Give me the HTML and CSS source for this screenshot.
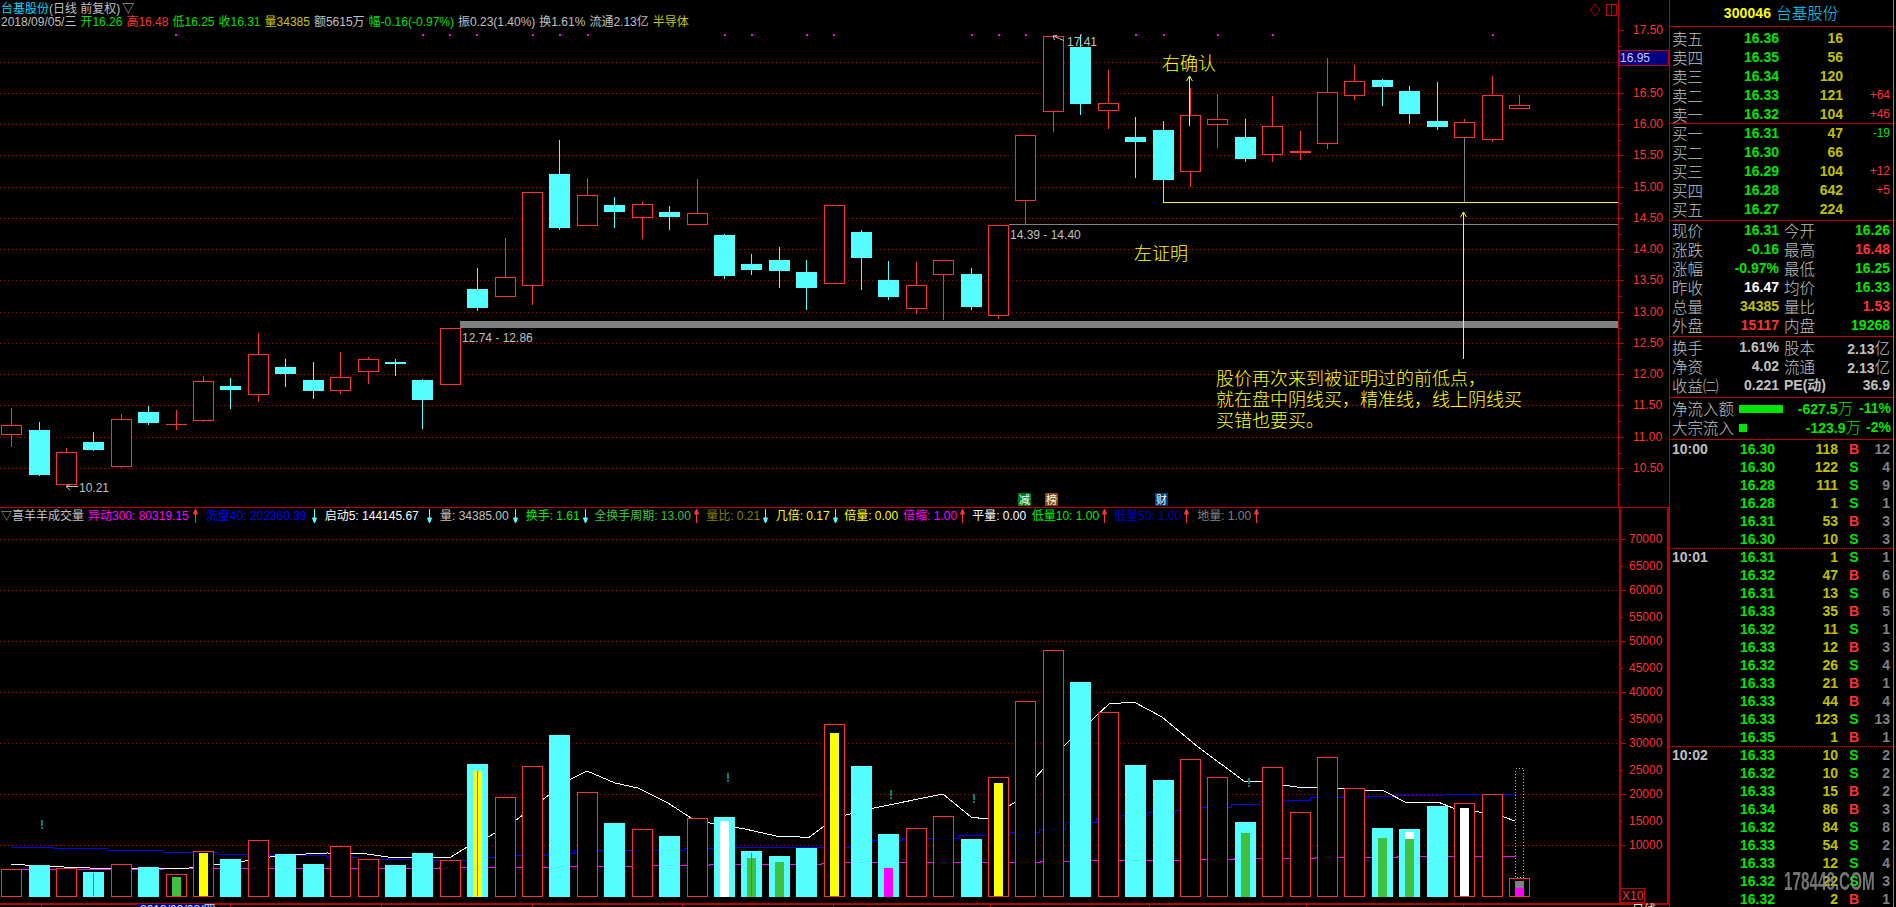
FILE: index.html
```html
<!DOCTYPE html>
<html lang="zh">
<head>
<meta charset="utf-8">
<title>台基股份 日线</title>
<link rel="stylesheet" href="styles.css">
</head>
<body>
<div class="terminal">
  <main class="charts">
    <svg id="plot" class="plot" width="1669" height="907" viewBox="0 0 1669 907"></svg>
    <section class="pane pane-main">
      <div class="quote-line"><span class="c">台基股份</span><span class="s">(日线 前复权)</span><span class="s tri">▽</span></div>
      <div class="quote-line items">
        <span class="s">2018/09/05/三</span>
        <span class="gl">开16.26</span>
        <span class="r">高16.48</span>
        <span class="gl">低16.25</span>
        <span class="gl">收16.31</span>
        <span class="yd">量34385</span>
        <span class="s">额5615万</span>
        <span class="gl">幅-0.16(-0.97%)</span>
        <span class="s">振0.23(1.40%)</span>
        <span class="s">换1.61%</span>
        <span class="s">流通2.13亿</span>
        <span class="yd">半导体</span>
      </div>
    </section>
    <section class="pane pane-sub">
      <div class="legend">
        <span class="s tri2">▽</span><span class="s name">喜羊羊成交量</span>
        <span class="ind i1 m">异动300: 80319.15<svg class="arrow up" viewBox="0 0 16 14"><use href="#ar-up"/></svg></span>
        <span class="ind i2 b">洗盘40: 202360.39<svg class="arrow dn" viewBox="0 0 16 14"><use href="#ar-dn"/></svg></span>
        <span class="ind i3 wh">启动5: 144145.67<svg class="arrow dn" viewBox="0 0 16 14"><use href="#ar-dn"/></svg></span>
        <span class="ind i4 s">量: 34385.00<svg class="arrow dn" viewBox="0 0 16 14"><use href="#ar-dn"/></svg></span>
        <span class="ind i5 gb">换手: 1.61<svg class="arrow dn" viewBox="0 0 16 14"><use href="#ar-dn"/></svg></span>
        <span class="ind i6 gm">全换手周期: 13.00<svg class="arrow up" viewBox="0 0 16 14"><use href="#ar-up"/></svg></span>
        <span class="ind i7 ol">量比: 0.21<svg class="arrow dn" viewBox="0 0 16 14"><use href="#ar-dn"/></svg></span>
        <span class="ind i8 yb">几倍: 0.17<svg class="arrow dn" viewBox="0 0 16 14"><use href="#ar-dn"/></svg></span>
        <span class="ind i9 yb">倍量: 0.00</span>
        <span class="ind i10 m">倍缩: 1.00<svg class="arrow up" viewBox="0 0 16 14"><use href="#ar-up"/></svg></span>
        <span class="ind i11 wh">平量: 0.00</span>
        <span class="ind i12 gb">低量10: 1.00<svg class="arrow up" viewBox="0 0 16 14"><use href="#ar-up"/></svg></span>
        <span class="ind i13 bd">低量50: 1.00<svg class="arrow up" viewBox="0 0 16 14"><use href="#ar-up"/></svg></span>
        <span class="ind i14 gy">地量: 1.00<svg class="arrow up" viewBox="0 0 16 14"><use href="#ar-up"/></svg></span>
      </div>
    </section>
    <svg class="defs" width="0" height="0">
      <symbol id="ar-up" viewBox="0 0 16 14"><path d="M5.5 14V0M3.5 5L5.5 0L7.5 5Z"/></symbol>
      <symbol id="ar-dn" viewBox="0 0 16 14"><path d="M5.5 0V14M3.5 9L5.5 14L7.5 9Z"/></symbol>
    </svg>
  </main>

  <aside class="side">
    <header class="side-title"><span class="code">300046</span><span class="stock">台基股份</span></header>

    <section class="book sell">
      <div class="bk"><span class="lb">卖五</span><b class="g">16.36</b><b class="y">16</b><i></i></div>
      <div class="bk"><span class="lb">卖四</span><b class="g">16.35</b><b class="y">56</b><i></i></div>
      <div class="bk"><span class="lb">卖三</span><b class="g">16.34</b><b class="y">120</b><i></i></div>
      <div class="bk"><span class="lb">卖二</span><b class="g">16.33</b><b class="y">121</b><i class="r">+64</i></div>
      <div class="bk"><span class="lb">卖一</span><b class="g">16.32</b><b class="y">104</b><i class="r">+46</i></div>
    </section>
    <section class="book buy">
      <div class="bk"><span class="lb">买一</span><b class="g">16.31</b><b class="y">47</b><i class="g">-19</i></div>
      <div class="bk"><span class="lb">买二</span><b class="g">16.30</b><b class="y">66</b><i></i></div>
      <div class="bk"><span class="lb">买三</span><b class="g">16.29</b><b class="y">104</b><i class="r">+12</i></div>
      <div class="bk"><span class="lb">买四</span><b class="g">16.28</b><b class="y">642</b><i class="r">+5</i></div>
      <div class="bk"><span class="lb">买五</span><b class="g">16.27</b><b class="y">224</b><i></i></div>
    </section>

    <section class="stats">
      <div class="st"><span class="lb">现价</span><b class="g">16.31</b><span class="lb">今开</span><b class="g">16.26</b></div>
      <div class="st"><span class="lb">涨跌</span><b class="g">-0.16</b><span class="lb">最高</span><b class="r">16.48</b></div>
      <div class="st"><span class="lb">涨幅</span><b class="g">-0.97%</b><span class="lb">最低</span><b class="g">16.25</b></div>
      <div class="st"><span class="lb">昨收</span><b class="w">16.47</b><span class="lb">均价</span><b class="g">16.33</b></div>
      <div class="st"><span class="lb">总量</span><b class="y">34385</b><span class="lb">量比</span><b class="r">1.53</b></div>
      <div class="st"><span class="lb">外盘</span><b class="r">15117</b><span class="lb">内盘</span><b class="g">19268</b></div>
    </section>
    <section class="stats fund">
      <div class="st"><span class="lb">换手</span><b class="s">1.61%</b><span class="lb">股本</span><b class="s">2.13<span class="cjk">亿</span></b></div>
      <div class="st"><span class="lb">净资</span><b class="s">4.02</b><span class="lb">流通</span><b class="s">2.13<span class="cjk">亿</span></b></div>
      <div class="st"><span class="lb">收益㈡</span><b class="s">0.221</b><span class="lb pe">PE(动)</span><b class="s">36.9</b></div>
    </section>

    <section class="flow">
      <div class="fl"><span class="lb">净流入额</span><span class="track"><span class="bar" style="width:44px"></span></span><b class="g amt">-627.5<span class="cjk">万</span></b><b class="g pct">-11%</b></div>
      <div class="fl"><span class="lb">大宗流入</span><span class="track"><span class="bar" style="width:8px"></span></span><b class="g amt long">-123.9<span class="cjk">万</span></b><b class="g pct">-2%</b></div>
    </section>

    <section class="trades">
      <div class="tr"><b class="s">10:00</b><b class="g">16.30</b><b class="y">118</b><b class="r bs">B</b><b class="gy">12</b></div>
      <div class="tr"><b></b><b class="g">16.30</b><b class="y">122</b><b class="g bs">S</b><b class="gy">4</b></div>
      <div class="tr"><b></b><b class="g">16.28</b><b class="y">111</b><b class="g bs">S</b><b class="gy">9</b></div>
      <div class="tr"><b></b><b class="g">16.28</b><b class="y">1</b><b class="g bs">S</b><b class="gy">1</b></div>
      <div class="tr"><b></b><b class="g">16.31</b><b class="y">53</b><b class="r bs">B</b><b class="gy">3</b></div>
      <div class="tr"><b></b><b class="g">16.30</b><b class="y">10</b><b class="g bs">S</b><b class="gy">3</b></div>
      <div class="tr min"><b class="s">10:01</b><b class="g">16.31</b><b class="y">1</b><b class="g bs">S</b><b class="gy">1</b></div>
      <div class="tr"><b></b><b class="g">16.32</b><b class="y">47</b><b class="r bs">B</b><b class="gy">6</b></div>
      <div class="tr"><b></b><b class="g">16.31</b><b class="y">13</b><b class="g bs">S</b><b class="gy">6</b></div>
      <div class="tr"><b></b><b class="g">16.33</b><b class="y">35</b><b class="r bs">B</b><b class="gy">5</b></div>
      <div class="tr"><b></b><b class="g">16.32</b><b class="y">11</b><b class="g bs">S</b><b class="gy">1</b></div>
      <div class="tr"><b></b><b class="g">16.33</b><b class="y">12</b><b class="r bs">B</b><b class="gy">3</b></div>
      <div class="tr"><b></b><b class="g">16.32</b><b class="y">26</b><b class="g bs">S</b><b class="gy">4</b></div>
      <div class="tr"><b></b><b class="g">16.33</b><b class="y">21</b><b class="r bs">B</b><b class="gy">1</b></div>
      <div class="tr"><b></b><b class="g">16.33</b><b class="y">44</b><b class="r bs">B</b><b class="gy">4</b></div>
      <div class="tr"><b></b><b class="g">16.33</b><b class="y">123</b><b class="g bs">S</b><b class="gy">13</b></div>
      <div class="tr"><b></b><b class="g">16.35</b><b class="y">1</b><b class="r bs">B</b><b class="gy">1</b></div>
      <div class="tr min"><b class="s">10:02</b><b class="g">16.33</b><b class="y">10</b><b class="g bs">S</b><b class="gy">2</b></div>
      <div class="tr"><b></b><b class="g">16.32</b><b class="y">10</b><b class="g bs">S</b><b class="gy">2</b></div>
      <div class="tr"><b></b><b class="g">16.33</b><b class="y">15</b><b class="r bs">B</b><b class="gy">2</b></div>
      <div class="tr"><b></b><b class="g">16.34</b><b class="y">86</b><b class="r bs">B</b><b class="gy">3</b></div>
      <div class="tr"><b></b><b class="g">16.32</b><b class="y">84</b><b class="g bs">S</b><b class="gy">8</b></div>
      <div class="tr"><b></b><b class="g">16.33</b><b class="y">54</b><b class="g bs">S</b><b class="gy">2</b></div>
      <div class="tr"><b></b><b class="g">16.33</b><b class="y">12</b><b class="g bs">S</b><b class="gy">4</b></div>
      <div class="tr"><b></b><b class="g">16.32</b><b class="y">22</b><b class="g bs">S</b><b class="gy">3</b></div>
      <div class="tr"><b></b><b class="g">16.32</b><b class="y">2</b><b class="r bs">B</b><b class="gy">1</b></div>
      <div class="watermark">178448.COM</div>
    </section>
  </aside>
</div>
<script src="chart.js"></script>
</body>
</html>
```
FILE: styles.css
```css
* { box-sizing: border-box; }
html, body { margin: 0; height: 100%; background: #000; overflow: hidden; }
body { font-family: "Liberation Sans", "Noto Sans CJK SC", sans-serif; color: #c0c0c0; }

.terminal { width: 1896px; height: 907px; display: flex; background: #000; overflow: hidden; }

/* colours */
.c { color: #00d8ff; }
.s { color: #c0c0c0; }
.g { color: #00e600; }
.gl { color: #00e000; }
.r { color: #ff3232; }
.y { color: #c0c000; }
.yd { color: #c8c800; }
.w { color: #fff; }
.m { color: #ff00ff; }
.b { color: #0000ff; }
.bd { color: #0000c8; }
.wh { color: #fff; }
.gb { color: #00f000; }
.gm { color: #40c040; }
.ol { color: #808000; }
.yb { color: #ffff00; }
.gy { color: #808080; }

/* chart column */
.charts { position: relative; width: 1669px; height: 907px; flex: none; }
.plot { position: absolute; left: 0; top: 0; display: block; shape-rendering: crispEdges; }
.defs { position: absolute; }
.pane { position: relative; }
.pane-main { height: 507px; padding-top: 3px; }
.pane-sub { height: 396px; padding-top: 2px; }
.quote-line { display: flex; font-size: 12px; line-height: 13px; height: 13px; white-space: nowrap; padding-left: 1px; }
.quote-line.items { gap: 4px; }
.tri { margin-left: 2px; }
.legend { display: flex; font-size: 12px; line-height: 14px; height: 14px; white-space: nowrap; padding-left: 1px; }
.tri2 { width: 11px; font-size: 11px; }
.name { width: 76px; }
.ind { display: flex; align-items: center; justify-content: space-between; flex: none; }
.i1 { width: 117.8px; }
.i2 { width: 118.9px; }
.i3 { width: 115.3px; }
.i4 { width: 85.7px; }
.i5 { width: 68.5px; }
.i6 { width: 112px; }
.i7 { width: 69.5px; }
.i8 { width: 68.5px; }
.i9 { width: 59px; }
.i10 { width: 69px; }
.i11 { width: 59.6px; }
.i12 { width: 82.2px; }
.i13 { width: 83.2px; }
.i14 { width: 70px; }
.arrow { width: 16px; height: 14px; flex: none; }
.arrow use { stroke-width: 1; }
.arrow.up { color: #ff3232; stroke: #ff3232; fill: #ff3232; }
.arrow.dn { color: #55ffff; stroke: #55ffff; fill: #55ffff; }

/* svg drawing classes */
.grid { stroke: #a00000; stroke-width: 1; stroke-dasharray: 1 3; fill: none; }
.axis { stroke: #c00000; stroke-width: 1; fill: none; }
.axis2 { stroke: #b40000; stroke-width: 2; fill: none; }
.ax { font-size: 12px; fill: #ff3232; shape-rendering: auto; }
.cup { fill: #000; stroke: #ff3232; stroke-width: 1; }
.cdn { fill: #55ffff; }
.wup { fill: #ff3232; }
.wdn { fill: #55ffff; }
.wgr { fill: #808080; }
.band { fill: #808080; }
.ln-y { fill: #ffff00; }
.ln-g { fill: #808080; }
.anno { font-size: 18px; fill: #ffff00; font-family: "Noto Sans CJK SC", sans-serif; font-weight: 300; }
.tag { font-size: 12px; fill: #c0c0c0; }
.ah { stroke: #ffff00; stroke-width: 1; fill: none; shape-rendering: auto; }
.ah-g { stroke: #c0c0c0; stroke-width: 1; fill: none; shape-rendering: auto; }
.dot { fill: #ff00ff; }
.pricebox { fill: #000080; stroke: #c00000; stroke-width: 1; }
.pricetxt { font-size: 12px; fill: #c8c8ff; }
.badge-t { font-size: 11px; fill: #fff; text-anchor: middle; font-family: "Noto Sans CJK SC", sans-serif; }
.b1 { fill: #007a1e; }
.b2 { fill: #82480f; }
.b3 { fill: #003c78; }
.ma-w { stroke: #fff; stroke-width: 1; fill: none; }
.ma-b { stroke: #0000ff; stroke-width: 1; fill: none; }
.ma-m { stroke: #ff00ff; stroke-width: 1; fill: none; }
.tick-mark { fill: #008080; }
.in-y { fill: #ffff00; }
.in-w { fill: #fff; }
.in-g { fill: #40c040; }
.in-m { fill: #ff00ff; }
.in-a { fill: #808080; }
.dotted-y { stroke: #c8c800; stroke-width: 1; stroke-dasharray: 1 2; fill: none; }
.datebox { fill: #000080; }
.datetxt { font-size: 12px; fill: #e0e0e0; }
.x10 { stroke: #c00000; stroke-width: 1; fill: none; }

/* quote side panel */
.side { width: 225px; height: 907px; flex: none; position: relative; border-left: 1px solid #c00000; border-right: 1px solid #808080; overflow: hidden; }
.side-title { height: 27px; border-bottom: 1px solid #c00000; display: flex; align-items: center; justify-content: center; gap: 5px; padding-right: 1px; }
.code { font: bold 14px/1 "Liberation Sans", sans-serif; color: #ffff00; letter-spacing: .1px; }
.stock { font: 15.5px/1 "Noto Sans CJK SC", sans-serif; font-weight: 300; color: #00d8ff; }
.lb { font-family: "Noto Sans CJK SC", sans-serif; font-size: 15.5px; font-weight: 300; color: #c0c0c0; white-space: nowrap; }
.lb.pe { font: bold 14px "Liberation Sans", "Noto Sans CJK SC", sans-serif; line-height: 19px; }
.cjk { font-family: "Noto Sans CJK SC", sans-serif; font-weight: 300; font-size: 15.5px; }
.side b { font-size: 14px; font-weight: bold; text-align: right; }
.book { border-bottom: 1px solid #c00000; }
.sell { height: 97px; padding-top: 2px; }
.buy { height: 97px; }
.bk { display: grid; grid-template-columns: 60px 47px 64px 47px; height: 19px; line-height: 19px; padding-left: 2px; }
.bk i { font-style: normal; font-size: 12px; text-align: right; }
.stats { height: 116px; border-bottom: 1px solid #c00000; }
.st { display: grid; grid-template-columns: 60px 47px 5px 40px 66px; height: 19px; line-height: 19px; padding-left: 2px; }
.st .lb:nth-of-type(2) { grid-column: 4; }
.st b:last-child { grid-column: 5; }
.fund { height: 61px; padding-top: 1px; }
.flow { height: 42px; padding-top: 1px; border-bottom: 1px solid #c00000; }
.fl { display: flex; height: 19px; line-height: 19px; padding-left: 2px; align-items: center; }
.fl .lb { width: 67px; flex: none; }
.track { width: 46px; flex: none; height: 8px; display: block; }
.bar { display: block; height: 8px; background: #00e600; }
.amt { width: 68px; flex: none; }
.amt.long { width: 76px; }
.pct { margin-left: auto; padding-right: 1px; }
.flow .fl { padding-right: 1px; }
.trades { position: relative; }
.tr { display: grid; grid-template-columns: 62px 41px 63px 32px 20px; height: 18px; line-height: 18px; padding-left: 2px; }
.tr.min { border-top: 1px dotted #c00000; line-height: 16px; margin: 0; }
.tr b:first-child { text-align: left; }
.bs { text-align: center !important; }
.watermark { position: absolute; left: 114px; top: 431px; font: bold 25px/20px "Liberation Sans", sans-serif; color: rgba(136,136,136,.85); filter: blur(.4px); white-space: nowrap; transform: scaleX(.61); transform-origin: 0 0; }
```
FILE: chart.js
```js
// Daily candles: [kind, body top, body bottom, wick top, wick bottom] in chart pixels.
// kind: u = up (hollow red), d = down (solid cyan), t = thin red body.
const CANDLES = [
  ['u',425,435,408,447],['d',430,475,422,476],['u',452,485,448,485],['d',442,450,432,451],
  ['u',419,467,414,468],['d',412,423,406,425],['t',424,425,410,430],['u',381,421,376,422],
  ['d',386,390,378,409],['u',354,395,333,402],['d',367,374,359,387],['d',380,391,362,399],
  ['u',377,391,352,394],['u',359,372,357,384],['d',362,364,359,376],['d',380,400,379,429],
  ['u',328,385,328,385],['d',289,308,268,311],['u',277,297,238,297],['u',192,286,192,305],
  ['d',174,228,140,230],['u',195,226,178,226],['d',205,212,197,228],['u',204,218,202,239],
  ['d',212,217,206,230],['u',213,225,179,225],['d',235,276,234,279],['d',264,270,254,275],
  ['d',260,271,247,288],['d',272,288,260,310],['u',205,284,205,284],['d',232,258,230,290],
  ['d',280,297,261,300],['u',285,309,262,314],['u',260,275,260,320],['d',274,307,268,310],
  ['u',225,316,225,319],['u',135,201,135,224],['u',36,112,36,132],['d',47,104,35,115],
  ['u',103,111,70,129],['d',137,142,117,178],['d',130,180,121,202],['u',115,172,88,187],
  ['u',119,125,94,148],['d',137,159,119,162],['u',126,155,96,162],['t',151,153,131,160],
  ['u',92,144,58,149],['u',81,96,65,100],['d',80,87,79,106],['d',91,114,86,124],
  ['d',121,127,82,130],['u',122,138,119,138],['u',95,140,76,142],['u',105,109,95,109]
];

// Volume bars: [kind, top, inner stacks [class, top, bottom?], optional center hairline top]
const BASE = 897;
const VOLUME = [
  ['u',869],['d',865],['u',868],['d',872,[],873],['u',864],['d',867],['u',874,[['in-g',877]]],
  ['u',851,[['in-y',853]]],['d',859],['u',840],['d',854],['d',864],['u',846],['u',859],['d',865],
  ['d',853],['u',860],['d',764,[['in-y',771]],771],['u',797],['u',766],['d',735],['u',792],
  ['d',823],['u',829],['d',836],['u',818],['d',817,[['in-w',821]]],['d',851,[['in-g',858]],853],
  ['d',856,[['in-g',862]]],['d',848],['u',724,[['in-y',733]]],['d',766],['d',834,[['in-m',868]]],
  ['u',828],['u',816],['d',839],['u',777,[['in-y',783]]],['u',701],['u',650],['d',682],['u',712],
  ['d',765],['d',780],['u',759],['u',777],['d',822,[['in-g',833]]],['u',767],['u',812],['u',757],
  ['u',788],['d',828,[['in-g',838]]],['d',829,[['in-g',839],['in-w',832,839]]],['d',806],
  ['u',803,[['in-w',808]]],['u',794],['u',878,[['in-m',888],['in-a',881,888]]]
];

const WHITE = [[11,864],[38,866],[90,868],[120,868],[176,869],[189,868],[214,865],[245,861],[270,857],[306,854],[327,853],[367,854],[395,858],[408,857],[451,857],[467,847],[490,836],[515,821],[546,797],[571,779],[587,771],[615,783],[638,788],[668,803],[691,818],[714,824],[745,829],[776,836],[800,837],[808,838],[823,827],[846,815],[874,808],[943,794],[971,817],[986,819],[1014,803],[1035,778],[1065,745],[1109,704],[1134,702],[1162,717],[1198,747],[1244,781],[1262,782],[1297,787],[1315,787],[1346,789],[1384,791],[1407,803],[1438,802],[1453,808],[1479,812],[1504,817],[1515,821]];
const BLUE = [[11,847],[53,848],[107,850],[163,852],[217,854],[270,855],[326,857],[357,859],[423,860],[469,857],[510,855],[548,853],[574,850],[653,850],[684,848],[714,847],[796,847],[800,847],[851,841],[872,840],[902,838],[958,835],[1009,832],[1039,829],[1065,822],[1096,818],[1121,815],[1147,812],[1175,810],[1201,807],[1231,804],[1259,801],[1285,800],[1310,797],[1341,797],[1366,796],[1394,795],[1443,794],[1515,793]];
const MAGENTA = [[11,869],[136,869],[163,868],[245,868],[439,868],[439,867],[515,867],[551,866],[638,865],[709,864],[821,863],[831,862],[940,862],[1014,862],[1040,861],[1090,860],[1180,859],[1234,858],[1315,857],[1397,856],[1515,855]];

const DOTS = [175,422,449,476,532,559,587,724,751,806,833,971,998,1025,1080,1135,1163,1217,1272,1492];
const MAIN_AXIS = [['17.50',30],['17.00',62],['16.50',93],['16.00',124],['15.50',155],['15.00',187],['14.50',218],['14.00',249],['13.50',280],['13.00',312],['12.50',343],['12.00',374],['11.50',405],['11.00',437],['10.50',468]];
const SUB_AXIS = [['70000',539,1],['65000',566,0],['60000',590,1],['55000',617,0],['50000',641,1],['45000',668,0],['40000',692,1],['35000',719,0],['30000',743,1],['25000',770,0],['20000',794,1],['15000',821,0],['10000',845,1]];

const left = i => Math.round(11.6 + 27.416 * i - 10.5);
const R = (x, y, w, h, c) => `<rect class="${c}" x="${x}" y="${y}" width="${w}" height="${h}"/>`;
const HL = (x1, x2, y, c) => `<line class="${c}" x1="${x1}" x2="${x2}" y1="${y + .5}" y2="${y + .5}"/>`;
const VL = (x, y1, y2, c) => `<line class="${c}" x1="${x + .5}" x2="${x + .5}" y1="${y1}" y2="${y2}"/>`;
const T = (x, y, s, c, extra = '') => `<text class="${c}" x="${x}" y="${y}" ${extra}>${s}</text>`;
const steps = pts => pts.map(([x, y], k) => (k ? `H${x}V${y}` : `M${x} ${y}`)).join('');

let out = '';

// grids
MAIN_AXIS.slice(1).forEach(([, y]) => { out += HL(0, 1618, y, 'grid'); });
SUB_AXIS.filter(a => a[2]).forEach(([, y]) => { out += HL(0, 1618, y, 'grid'); });

// support band and lines
out += R(460, 321, 1159, 7, 'band');
out += R(1009, 224, 610, 1, 'ln-g');
out += R(1163, 202, 456, 1, 'ln-y');

// magenta dots
DOTS.forEach(x => { out += R(x, 34, 2, 2, 'dot'); });

// candles
CANDLES.forEach(([k, t, b, wt, wb], i) => {
  const x = left(i), cx = x + 10, up = k !== 'd';
  out += R(cx, wt, 1, wb - wt, up ? 'wup' : 'wdn');
  if (k === 't') out += R(x, t, 21, Math.max(1, b - t), 'wup');
  else if (up) out += R(x + .5, t + .5, 20, b - t - 1, 'cup');
  else out += R(x, t, 21, b - t, 'cdn');
});
// long hairline under candle 53
out += R(left(53) + 10, 138, 1, 64, 'wgr');

// annotations
out += T(462, 342, '12.74 - 12.86', 'tag');
out += T(1010, 239, '14.39 - 14.40', 'tag');
out += T(1067, 46, '17.41', 'tag');
out += T(79, 492, '10.21', 'tag');
out += `<path class="ah-g" d="M1064 40.5L1053 36M1053 36L1057 35.5M1053 36L1054.5 40"/>`;
out += `<path class="ah-g" d="M78 486.5H66M66 486.5L70 484.5M66 486.5L70 490"/>`;
out += T(1162, 70, '右确认', 'anno');
out += T(1134, 260, '左证明', 'anno');
out += T(1216, 385, '股价再次来到被证明过的前低点，', 'anno');
out += T(1216, 406, '就在盘中阴线买，精准线，线上阴线买', 'anno');
out += T(1216, 427, '买错也要买。', 'anno');
out += `<path class="ah" d="M1189.5 126V76M1186.5 81L1189.5 76L1192.5 81M1463.5 359V212M1460.5 217L1463.5 212L1466.5 217"/>`;

// corner glyphs
out += `<path class="axis" style="shape-rendering:auto" d="M1595 4L1600 10L1595 15.5L1590 10Z"/>`;
out += R(1606.5, 4.5, 10, 11, 'axis') + VL(1611, 5, 15, 'axis');

// event badges
[[1018,'减','b1'],[1045,'榜','b2'],[1155,'财','b3']].forEach(([x, s, c]) => {
  out += R(x, 493, 13, 13, c) + T(x + 6.5, 503.5, s, 'badge-t');
});

// volume moving averages, under the bars
out += `<path class="ma-m" d="${steps(MAGENTA)}"/>`;
out += `<path class="ma-b" d="${steps(BLUE)}"/>`;
out += `<polyline class="ma-w" points="${WHITE.join(' ')}"/>`;

// volume bars
VOLUME.forEach(([k, t, inner = [], hair], i) => {
  const x = left(i);
  if (k === 'u') out += R(x + .5, t + .5, 20, BASE - t - 1, 'cup');
  else out += R(x, t, 21, BASE - t, 'cdn');
  inner.forEach(([c, it, ib]) => { out += R(x + 6, it, 9, (ib || BASE - (k === 'u' ? 1 : 0)) - it, c); });
  if (hair) out += R(x + 10, hair, 1, BASE - hair - 1, 'wup');
});
out += `<rect class="dotted-y" x="1515.5" y="768.5" width="8" height="109"/>`;

// warning marks
[[41,820],[727,773],[890,790],[973,794],[1248,778]].forEach(([x, y]) => {
  out += R(x, y, 2, 6, 'tick-mark') + R(x, y + 7, 2, 2, 'tick-mark');
});

// axes
out += VL(1618, 0, 507, 'axis');
out += HL(0, 1669, 507, 'axis');
out += `<line class="axis2" x1="1620" x2="1620" y1="507" y2="903"/>`;
out += `<line class="axis2" x1="1668" x2="1668" y1="507" y2="903"/>`;
out += `<line class="axis2" x1="0" x2="1669" y1="904" y2="904"/>`;
MAIN_AXIS.forEach(([s, y], n) => {
  out += HL(1619, 1624, y, 'axis') + T(1633, y + 4, s, 'ax');
  const next = MAIN_AXIS[n + 1];
  if (next) out += HL(1619, 1622, Math.round((y + next[1]) / 2), 'axis');
});
out += HL(1619, 1622, 484, 'axis');
SUB_AXIS.forEach(([s, y, major]) => {
  out += HL(1621, major ? 1626 : 1623, y, 'axis') + T(1629, y + 4, s, 'ax');
});

// hover price on the axis
out += R(1619.5, 50.5, 49, 15, 'pricebox');
out += T(1620, 62, '16.95', 'pricetxt');

// multiplier box
out += R(1620.5, 888.5, 24, 14, 'x10');
out += T(1622, 900, 'X10', 'ax');

// time axis, cut by the window edge
[41,230,381,532,682,833,990,1149,1306,1463].forEach(x => { out += VL(x, 904, 907, 'axis'); });
out += R(137, 904, 77, 3, 'datebox');
out += T(140, 914, '2018/03/08/四', 'datetxt');
out += T(1632, 914, '日线', 'datetxt');

document.getElementById('plot').innerHTML = out;
```
